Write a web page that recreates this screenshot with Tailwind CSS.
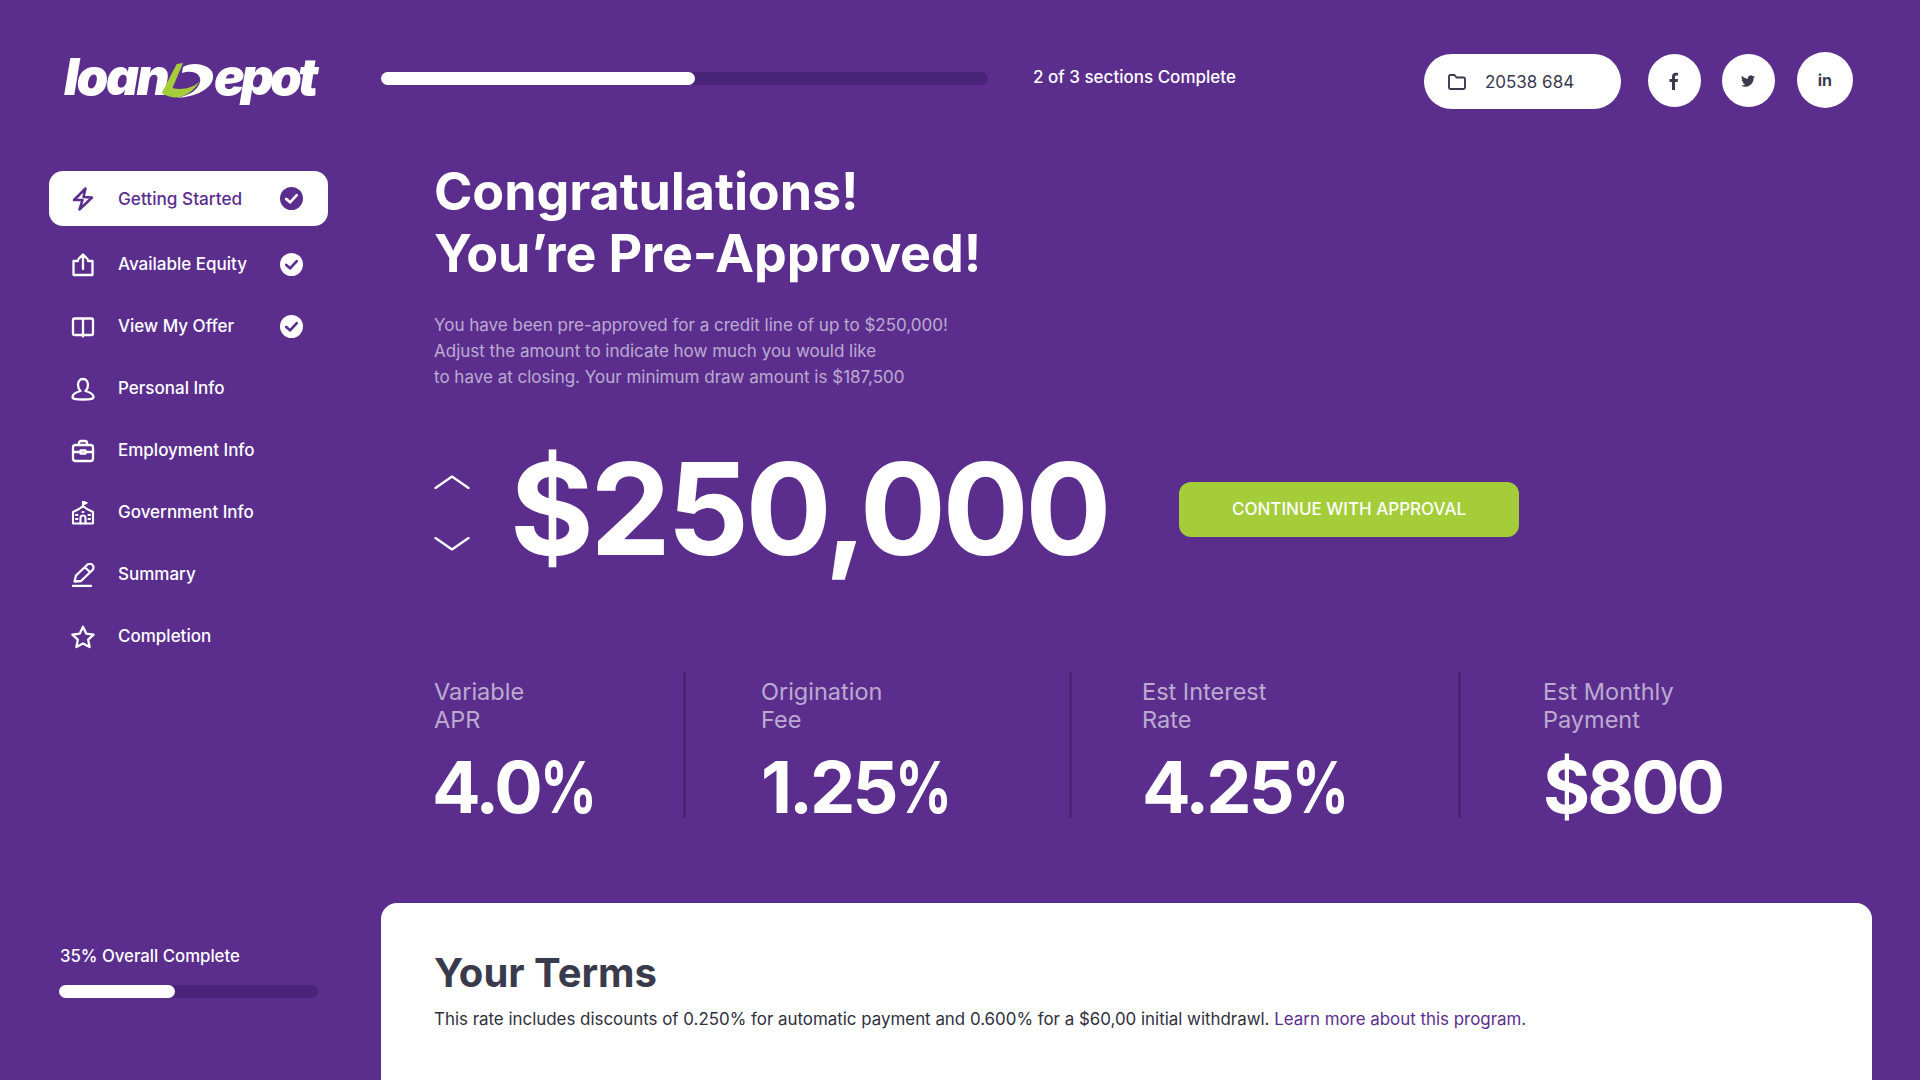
<!DOCTYPE html>
<html lang="en">
  <head>
    <meta charset="UTF-8" />
    <meta name="viewport" content="width=device-width, initial-scale=1.0" />
    <title>loanDepot - Pre-Approved</title>
    <script src="https://cdn.jsdelivr.net/npm/@tailwindcss/browser@4"></script>
  </head>

  <body class="h-[1080px] overflow-hidden bg-[#5b2e8e] font-['Inter',sans-serif] text-white">
    <div class="flex h-[1080px]">
      <!-- Sidebar -->
      <aside class="flex w-[381px] shrink-0 flex-col pl-[49px]">
        <!-- Logo -->
        <div class="ml-[15px] mt-[45px] flex h-[62px] items-center text-[51px] font-black italic leading-none tracking-[-2.5px]">
          <span class="w-[96px] shrink-0">loan</span>
          <svg class="mt-[8px] shrink-0" width="54" height="40" viewBox="0 0 54 40">
            <path d="M23 7 C28 4 36 3 42 5 C50 7 54 12 53 18 C52 26 42 36 17 38 C30 35 38 30 40 22 C42 15 34 9 22 13 Z" fill="#fff" />
            <path d="M16.7 4 L23 3 L12.5 28 C20 30 33 29 40 21 C34 32 22 38 15 37.5 C10 37 5 35.5 1.7 33 Z" fill="#a4cd39" />
          </svg>
          <span class="shrink-0 tracking-[-3.8px]">epot</span>
        </div>

        <!-- Nav -->
        <nav class="mt-[64px] w-[279px] text-[17px] font-medium">
          <a class="flex h-[55px] items-center rounded-[14px] bg-white pl-[22px] pr-[25px] text-[#5b2e8e]">
            <svg class="h-[24px] w-[24px] shrink-0" viewBox="0 0 24 24" fill="none" stroke="currentColor" stroke-width="2.5" stroke-linejoin="round" stroke-linecap="round"><path d="M14.5 1.5 L3 13 L11.5 13 L8.5 22.5 L21 10.5 L12.5 10 Z" /></svg>
            <span class="ml-[23px] flex-1 text-[17.2px]">Getting Started</span>
            <svg class="h-[23px] w-[23px]" viewBox="0 0 24 24"><circle cx="12" cy="12" r="12" fill="#5b2e8e" /><path d="M6.5 12.5 L10.5 16 L17.5 8.5" fill="none" stroke="#fff" stroke-width="2.8" stroke-linecap="round" stroke-linejoin="round" /></svg>
          </a>
          <a class="mt-[11px] flex h-[55px] items-center pl-[22px] pr-[25px]">
            <svg class="h-[24px] w-[24px] shrink-0" viewBox="0 0 24 24" fill="none" stroke="currentColor" stroke-width="2.3" stroke-linejoin="round" stroke-linecap="round"><path d="M7 8 H2.5 V22 H21.5 V8 H17 M12 16 V2 M7.5 6 L12 1.5 L16.5 6" /></svg>
            <span class="ml-[23px] flex-1">Available Equity</span>
            <svg class="h-[23px] w-[23px]" viewBox="0 0 24 24"><circle cx="12" cy="12" r="12" fill="#fff" /><path d="M6.5 12.5 L10.5 16 L17.5 8.5" fill="none" stroke="#5b2e8e" stroke-width="2.8" stroke-linecap="round" stroke-linejoin="round" /></svg>
          </a>
          <a class="mt-[7px] flex h-[55px] items-center pl-[22px] pr-[25px]">
            <svg class="h-[24px] w-[24px] shrink-0" viewBox="0 0 24 24" fill="none" stroke="currentColor" stroke-width="2.3" stroke-linejoin="round" stroke-linecap="round"><path d="M12 3.5 H3.5 A1.5 1.5 0 0 0 2 5 V18.5 A1.5 1.5 0 0 0 3.5 20 H20.5 A1.5 1.5 0 0 0 22 18.5 V5 A1.5 1.5 0 0 0 20.5 3.5 H12 V21.5" /></svg>
            <span class="ml-[23px] flex-1">View My Offer</span>
            <svg class="-mt-[1px] h-[23px] w-[23px]" viewBox="0 0 24 24"><circle cx="12" cy="12" r="12" fill="#fff" /><path d="M6.5 12.5 L10.5 16 L17.5 8.5" fill="none" stroke="#5b2e8e" stroke-width="2.8" stroke-linecap="round" stroke-linejoin="round" /></svg>
          </a>
          <a class="mt-[7px] flex h-[55px] items-center pl-[22px]">
            <svg class="h-[24px] w-[24px] shrink-0" viewBox="0 0 24 24" fill="none" stroke="currentColor" stroke-width="2.3" stroke-linejoin="round" stroke-linecap="round"><path d="M12 2 C8.5 2 7 5 7 8 C7 11 8.5 13 9.5 14 C6 15 1.5 17 1.5 20 C1.5 22 4 22.5 12 22.5 C20 22.5 22.5 22 22.5 20 C22.5 17 18 15 14.5 14 C15.5 13 17 11 17 8 C17 5 15.5 2 12 2 Z" /></svg>
            <span class="ml-[23px]">Personal Info</span>
          </a>
          <a class="mt-[7px] flex h-[55px] items-center pl-[22px]">
            <svg class="h-[24px] w-[24px] shrink-0" viewBox="0 0 24 24" fill="none" stroke="currentColor" stroke-width="2.3" stroke-linejoin="round" stroke-linecap="round"><rect x="2" y="6" width="20" height="16" rx="2.5" /><path d="M8 6 V4 A2 2 0 0 1 10 2 H14 A2 2 0 0 1 16 4 V6 M2 13 H9 M15 13 H22" /><rect x="9.5" y="11.5" width="5" height="3" /></svg>
            <span class="ml-[23px]">Employment Info</span>
          </a>
          <a class="mt-[7px] flex h-[55px] items-center pl-[22px]">
            <svg class="h-[24px] w-[24px] shrink-0" viewBox="0 0 24 24" fill="none" stroke="currentColor" stroke-width="2.1" stroke-linejoin="round" stroke-linecap="round"><path d="M2 11 L8 8 L12 5 L16 8 L22 11 V22.5 H2 Z M12 5 V0.8" /><path d="M12 0.6 L15.5 2 L12 3.4 Z" fill="currentColor" /><path d="M9.5 22.5 V17 A2.5 2.5 0 0 1 14.5 17 V22.5 M5 14 H6.5 M5 18 H6.5 M17.5 14 H19 M17.5 18 H19 M11.5 11 H12.5" /></svg>
            <span class="ml-[23px]">Government Info</span>
          </a>
          <a class="mt-[7px] flex h-[55px] items-center pl-[22px]">
            <svg class="h-[24px] w-[24px] shrink-0" viewBox="0 0 24 24" fill="none" stroke="currentColor" stroke-width="2.3" stroke-linejoin="round" stroke-linecap="round"><path d="M3.5 18.5 L5 12.5 L16 2 A2.4 2.4 0 0 1 21.5 7 L10 18 Z M14 4.5 L19 9" /><path d="M2 23 H20" /></svg>
            <span class="ml-[23px]">Summary</span>
          </a>
          <a class="mt-[7px] flex h-[55px] items-center pl-[22px]">
            <svg class="h-[24px] w-[24px] shrink-0" viewBox="0 0 24 24" fill="none" stroke="currentColor" stroke-width="2.3" stroke-linejoin="round" stroke-linecap="round"><path d="M12 1.8 L15.2 8.6 L22.6 9.6 L17.2 14.7 L18.6 22 L12 18.4 L5.4 22 L6.8 14.7 L1.4 9.6 L8.8 8.6 Z" /></svg>
            <span class="ml-[23px]">Completion</span>
          </a>
        </nav>

        <!-- Overall progress -->
        <div class="mt-[282px] ml-[10px] w-[259px]">
          <p class="ml-[1px] text-[16.75px] font-medium leading-[20px]">35% Overall Complete</p>
          <div class="mt-[19px] h-[13px] rounded-full bg-[#4a2478]">
            <div class="h-[13px] w-[116px] rounded-full bg-white"></div>
          </div>
        </div>
      </aside>

      <!-- Main -->
      <main class="flex min-w-0 flex-1 flex-col">
        <!-- Top bar -->
        <header class="flex h-[161px] shrink-0 items-start">
          <div class="mt-[72px] h-[13px] w-[607px] rounded-full bg-[#4a2478]">
            <div class="h-[13px] w-[314px] rounded-full bg-white"></div>
          </div>
          <p class="ml-[45px] mt-[67px] text-[17px] font-medium leading-[20px]">2 of 3 sections Complete</p>
          <div class="ml-[188px] mt-[54px] flex h-[55px] w-[197px] items-center rounded-full bg-white pl-[23px] text-[#3a3a4d]">
            <svg class="h-[20px] w-[20px]" viewBox="0 0 20 20" fill="none" stroke="currentColor" stroke-width="1.9" stroke-linejoin="round"><path d="M2 4.5 A1.5 1.5 0 0 1 3.5 3 H7.5 L9.5 5.5 H16.5 A1.5 1.5 0 0 1 18 7 V15.5 A1.5 1.5 0 0 1 16.5 17 H3.5 A1.5 1.5 0 0 1 2 15.5 Z" /></svg>
            <span class="ml-[18px] text-[17px] leading-[20px]">20538 684</span>
          </div>
          <div class="ml-[27px] mt-[54px] flex h-[53px] w-[53px] items-center justify-center rounded-full bg-white text-[#3a3a4d]">
            <svg class="h-[18px] w-[18px]" viewBox="0 0 18 18" fill="currentColor"><path d="M7 18 V10 H4.5 V7 H7 V4.8 C7 2.2 8.5 0.8 10.8 0.8 C11.9 0.8 12.8 0.9 13 1 V3.6 H11.5 C10.2 3.6 10 4.2 10 5.1 V7 H13 L12.6 10 H10 V18 Z" /></svg>
          </div>
          <div class="ml-[21px] mt-[54px] flex h-[53px] w-[53px] items-center justify-center rounded-full bg-white text-[#3a3a4d]">
            <svg class="h-[14px] w-[14px]" viewBox="0 0 24 24" fill="currentColor"><path d="M23.95 4.57a10 10 0 0 1-2.82.77 4.96 4.96 0 0 0 2.16-2.72c-.95.55-2 .95-3.12 1.18a4.92 4.92 0 0 0-8.38 4.48C7.69 8.1 4.07 6.13 1.64 3.16a4.82 4.82 0 0 0-.67 2.47c0 1.7.87 3.2 2.19 4.1a4.9 4.9 0 0 1-2.23-.62v.06a4.92 4.92 0 0 0 3.95 4.83 5 5 0 0 1-2.21.08 4.94 4.94 0 0 0 4.6 3.42A9.87 9.87 0 0 1 0 19.54a14 14 0 0 0 7.56 2.21c9.05 0 14-7.5 14-13.98 0-.21 0-.42-.02-.63a9.94 9.94 0 0 0 2.41-2.57z" /></svg>
          </div>
          <div class="ml-[22px] mt-[52px] flex h-[56px] w-[56px] items-center justify-center rounded-full bg-white text-[#3a3a4d]">
            <span class="text-[16px] font-bold leading-none">in</span>
          </div>
        </header>

        <div class="shrink-0 pl-[53px]">
          <h1 class="text-[52px] font-bold leading-[62px] tracking-[-0.1px]">Congratulations!<br />You’re Pre-Approved!</h1>
          <p class="mt-[27px] text-[17px] leading-[26px] text-white/60">
            You have been pre-approved for a credit line of up to $250,000!<br />
            Adjust the amount to indicate how much you would like<br />
            to have at closing. Your minimum draw amount is $187,500
          </p>

          <!-- Amount -->
          <div class="mt-[59px] flex h-[120px] items-center">
            <div class="mt-[7px] flex h-[76px] flex-col justify-between">
              <svg width="36" height="14" viewBox="0 0 36 14" fill="none" stroke="#fff" stroke-width="2.2" stroke-linecap="round" stroke-linejoin="round"><path d="M1.5 13 L18 1.5 L34.5 13" /></svg>
              <svg width="36" height="14" viewBox="0 0 36 14" fill="none" stroke="#fff" stroke-width="2.2" stroke-linecap="round" stroke-linejoin="round"><path d="M1.5 1 L18 12.5 L34.5 1" /></svg>
            </div>
            <span class="ml-[40px] w-[669px] text-[128px] font-bold leading-none tracking-[-3.6px]">$250,000</span>
            <button class="h-[55px] w-[340px] rounded-[12px] bg-[#a4cd39] pt-[1px] text-[17px] font-medium">CONTINUE WITH APPROVAL</button>
          </div>

          <!-- Stats -->
          <div class="mt-[103px] flex h-[146px]">
            <div class="w-[252px] shrink-0 border-r-[3px] border-[#4a2478] pt-[6px]">
              <p class="text-[23.5px] leading-[28px] text-white/60">Variable<br />APR</p>
              <p class="-ml-[2px] mt-[13px] text-[72px] font-bold leading-[80px] tracking-[-3px]">4.0<span class="inline-block origin-left scale-x-[0.78]">%</span></p>
            </div>
            <div class="w-[386px] shrink-0 border-r-[3px] border-[#4a2478] pl-[75px] pt-[6px]">
              <p class="text-[23.5px] leading-[28px] text-white/60">Origination<br />Fee</p>
              <p class="mt-[13px] text-[72px] font-bold leading-[80px] tracking-[-3px]">1.25<span class="inline-block origin-left scale-x-[0.78]">%</span></p>
            </div>
            <div class="w-[389px] shrink-0 border-r-[3px] border-[#4a2478] pl-[70px] pt-[6px]">
              <p class="text-[23.5px] leading-[28px] text-white/60">Est Interest<br />Rate</p>
              <p class="mt-[13px] text-[72px] font-bold leading-[80px] tracking-[-3px]">4.25<span class="inline-block origin-left scale-x-[0.78]">%</span></p>
            </div>
            <div class="pl-[82px] pt-[6px]">
              <p class="text-[23.5px] leading-[28px] text-white/60">Est Monthly<br />Payment</p>
              <p class="mt-[13px] text-[72px] font-bold leading-[80px] tracking-[-3px]">$800</p>
            </div>
          </div>
        </div>

        <!-- Terms card -->
        <section class="mt-[85px] h-[200px] w-[1491px] shrink-0 rounded-t-[16px] bg-white pl-[53px] pt-[46px]">
          <h2 class="text-[40px] font-bold leading-[48px] text-[#3a3a4d]">Your Terms</h2>
          <p class="mt-[10px] text-[16.9px] leading-[24px] text-[#2f2f3d]">
            This rate includes discounts of 0.250% for automatic payment and 0.600% for a $60,00 initial withdrawl.
            <a class="text-[#5b2e8e]">Learn more about this program.</a>
          </p>
        </section>
      </main>
    </div>
  </body>
</html>
